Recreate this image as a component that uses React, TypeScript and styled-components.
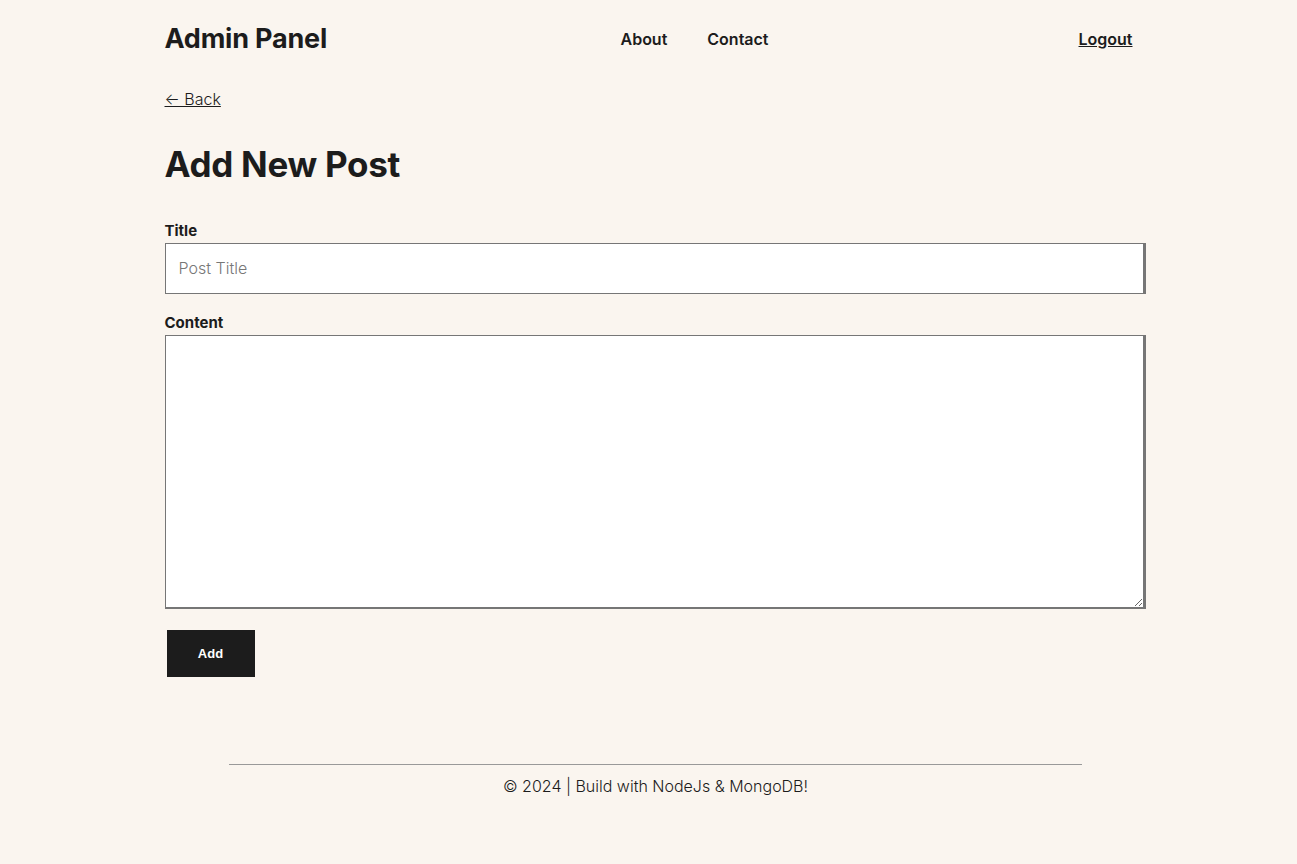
import styled, {createGlobalStyle} from 'styled-components';

const GlobalStyle = createGlobalStyle`
  * {
    box-sizing: border-box;
  }
  body {
    margin: 0;
    background-color: #faf5ef;
    color: #1c1c1c;
    font-family: Inter, 'Noto Sans', sans-serif;
  }
`;

function App() {
  return (
    <>
      <GlobalStyle />
      <Container>
        <Header>
          <Logo>Admin Panel</Logo>
          <Nav>
            <NavLink>About</NavLink>
            <NavLink>Contact</NavLink>
          </Nav>
          <Logout>Logout</Logout>
        </Header>
        <Main>
          <BackLink>← Back</BackLink>
          <Heading>Add New Post</Heading>
          <Form>
            <Label>Title</Label>
            <TextInput placeholder="Post Title" />
            <Label>Content</Label>
            <TextArea />
            <SubmitButton>Add</SubmitButton>
          </Form>
        </Main>
      </Container>
      <Footer>© 2024 | Build with NodeJs &amp; MongoDB!</Footer>
    </>
  );
}

const Container = styled.div`
  width: 968px;
  margin: 0 auto;
`;
const Header = styled.header`
  display: grid;
  grid-template-columns: 456px 1fr auto;
  align-items: center;
  height: 77px;
`;
const Logo = styled.div`
  font-size: 27px;
  font-weight: 700;
  letter-spacing: -0.2px;
`;
const Nav = styled.nav`
  display: flex;
  gap: 40px;
`;
const NavLink = styled.a`
  font-size: 16px;
  font-weight: 600;
  cursor: pointer;
`;
const Logout = styled.a`
  font-size: 16px;
  font-weight: 600;
  text-decoration: underline;
  cursor: pointer;
`;
const Main = styled.main`
  display: flex;
  flex-direction: column;
`;
const BackLink = styled.a`
  align-self: flex-start;
  margin-top: 12px;
  font-size: 16px;
  font-weight: 300;
  text-decoration: underline;
  cursor: pointer;
`;
const Heading = styled.h1`
  margin: 36px 0 38px;
  font-size: 35px;
  font-weight: 700;
  line-height: 1.1;
  letter-spacing: -0.3px;
`;
const Form = styled.form`
  display: flex;
  flex-direction: column;
`;
const Label = styled.label`
  font-size: 15px;
  font-weight: 700;
  line-height: 18px;
  margin-bottom: 3px;
`;
const TextInput = styled.input`
  width: calc(100% + 13px);
  height: 51px;
  padding: 0 13px;
  margin-bottom: 20px;
  border: 1px solid #767676;
  border-right-width: 3px;
  background: #fff;
  font-family: Inter, 'Noto Sans', sans-serif;
  font-size: 16px;
  font-weight: 300;
  color: #1c1c1c;
  outline: none;
  &::placeholder {
    color: #777;
  }
`;
const TextArea = styled.textarea`
  width: calc(100% + 13px);
  height: 274px;
  border: 1px solid #767676;
  border-right-width: 3px;
  border-bottom-width: 2px;
  background: #fff;
  font-family: Inter, 'Noto Sans', sans-serif;
  outline: none;
`;
const SubmitButton = styled.button`
  align-self: flex-start;
  width: 88px;
  height: 47px;
  margin: 21px 0 0 2px;
  border: none;
  background-color: #1c1c1c;
  color: #fff;
  font-family: 'Liberation Sans', Arial, sans-serif;
  font-size: 13px;
  font-weight: 600;
  cursor: pointer;
`;
const Footer = styled.footer`
  width: 853px;
  margin: 87px 0 0 229px;
  padding-top: 11px;
  border-top: 1px solid #999;
  text-align: center;
  font-size: 16px;
  font-weight: 300;
`;

export default App;
